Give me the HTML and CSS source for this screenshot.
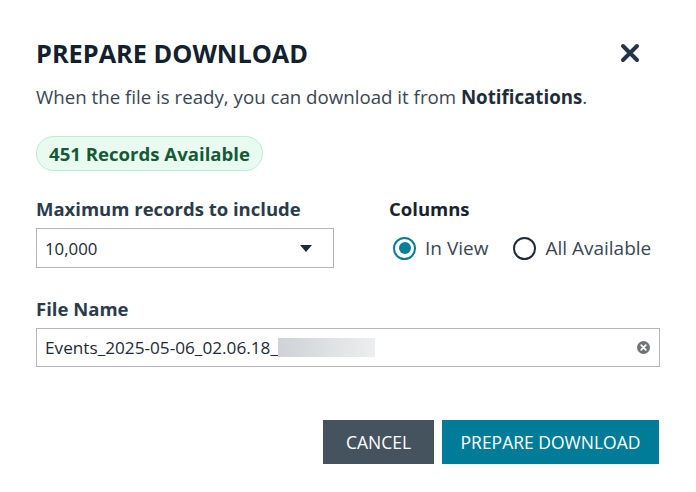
FILE: index.html
```html
<!DOCTYPE html>
<html lang="en">
<head>
<meta charset="utf-8">
<title>Prepare Download</title>
<link rel="stylesheet" href="styles.css">
</head>
<body>
<div class="dialog">
  <div class="header">
    <h1 class="title">PREPARE DOWNLOAD</h1>
    <button class="close" aria-label="Close">
      <svg width="20" height="20" viewBox="0 0 20 20"><path d="M3 3 L17 17 M17 3 L3 17" stroke="#253547" stroke-width="4" stroke-linecap="round" fill="none"/></svg>
    </button>
  </div>
  <p class="subtitle">When the file is ready, you can download it from <b>Notifications</b>.</p>
  <div class="badge">451 Records Available</div>
  <div class="row">
    <div class="field field-max">
      <div class="label">Maximum records to include</div>
      <div class="select">
        <span>10,000</span>
        <svg width="12" height="7" viewBox="0 0 12 7"><path d="M0 0 H12 L6 7 Z" fill="#1e2a36"/></svg>
      </div>
    </div>
    <div class="field field-cols">
      <div class="label label-dark">Columns</div>
      <div class="radios">
        <label class="radio"><span class="circle checked"></span>In View</label>
        <label class="radio"><span class="circle"></span>All Available</label>
      </div>
    </div>
  </div>
  <div class="field field-name">
    <div class="label">File Name</div>
    <div class="input">
      <span class="value">Events_2025-05-06_02.06.18_</span><span class="blur"></span>
      <svg class="clear" width="13" height="13" viewBox="0 0 13 13"><circle cx="6.5" cy="6.5" r="6.5" fill="#6f7479"/><path d="M4.2 4.2 L8.8 8.8 M8.8 4.2 L4.2 8.8" stroke="#fff" stroke-width="1.8" stroke-linecap="round"/></svg>
    </div>
  </div>
  <div class="actions">
    <button class="btn btn-cancel">CANCEL</button>
    <button class="btn btn-primary">PREPARE DOWNLOAD</button>
  </div>
</div>
</body>
</html>
```
FILE: styles.css
```css
* { box-sizing: border-box; }
html, body { margin: 0; padding: 0; background: #fff; }
body { font-family: "Open Sans", "Liberation Sans", sans-serif; color: #333f4b; }
.dialog { width: 696px; height: 492px; padding: 38px 37px 0 36px; }
.header { display: flex; justify-content: space-between; align-items: center; height: 30px; }
.title { margin: 0; font-size: 25.3px; line-height: 30px; font-weight: 700; color: #13202d; }
.close { border: 0; background: none; padding: 0; margin-right: 19px; width: 20px; height: 20px; display: flex; }
.subtitle { margin: 17px 0 0; font-size: 18.7px; line-height: 24px; color: #3a4653; }
.subtitle b { color: #1f2d3b; font-weight: 700; }
.badge { display: inline-flex; align-items: center; margin-top: 27px; height: 35px; padding: 0 12px; border: 1px solid #b9eed3; background: #e9fbf1; border-radius: 18px; font-size: 18.6px; font-weight: 700; color: #155a37; }
.row { display: flex; margin-top: 26px; }
.field-max { width: 298px; }
.field-cols { margin-left: 55px; }
.label { font-size: 18.5px; line-height: 24px; font-weight: 700; color: #2b3b4c; }
.label-dark { color: #18232f; }
.select { margin-top: 7px; height: 40px; border: 1px solid #b3b7bb; display: flex; align-items: center; justify-content: space-between; padding: 0 21px 0 8px; font-size: 16.8px; color: #1e2a36; }
.radios { margin-top: 7px; height: 40px; display: flex; align-items: center; gap: 25px; }
.radio { display: flex; align-items: center; gap: 9px; font-size: 19px; color: #3a4653; margin-left: 4px; }
.radio + .radio { margin-left: 0; }
.circle { width: 23px; height: 23px; border-radius: 50%; border: 2px solid #1d2b39; background: #fff; position: relative; flex: none; }
.circle.checked { border-color: #0a7d99; }
.circle.checked::after { content: ""; position: absolute; left: 3.5px; top: 3.5px; width: 12px; height: 12px; border-radius: 50%; background: #0a7d99; }
.field-name { margin-top: 29px; }
.input { margin-top: 7px; width: 624px; height: 39px; border: 1px solid #b3b7bb; display: flex; align-items: center; padding: 0 8px; font-size: 17.2px; color: #1e2a36; }
.blur { width: 97px; height: 19px; background: linear-gradient(90deg, #cfd2d6, #eceeef); }
.clear { margin-left: auto; margin-right: 1px; }
.actions { display: flex; justify-content: flex-end; gap: 8px; margin-top: 53px; width: 623px; }
.btn { border: 0; height: 44px; font-family: "Open Sans", "Liberation Sans", sans-serif; font-size: 17.5px; color: #fff; padding: 0; }
.btn-cancel { width: 111px; background: #45535f; }
.btn-primary { width: 217px; background: #007c99; }
```
